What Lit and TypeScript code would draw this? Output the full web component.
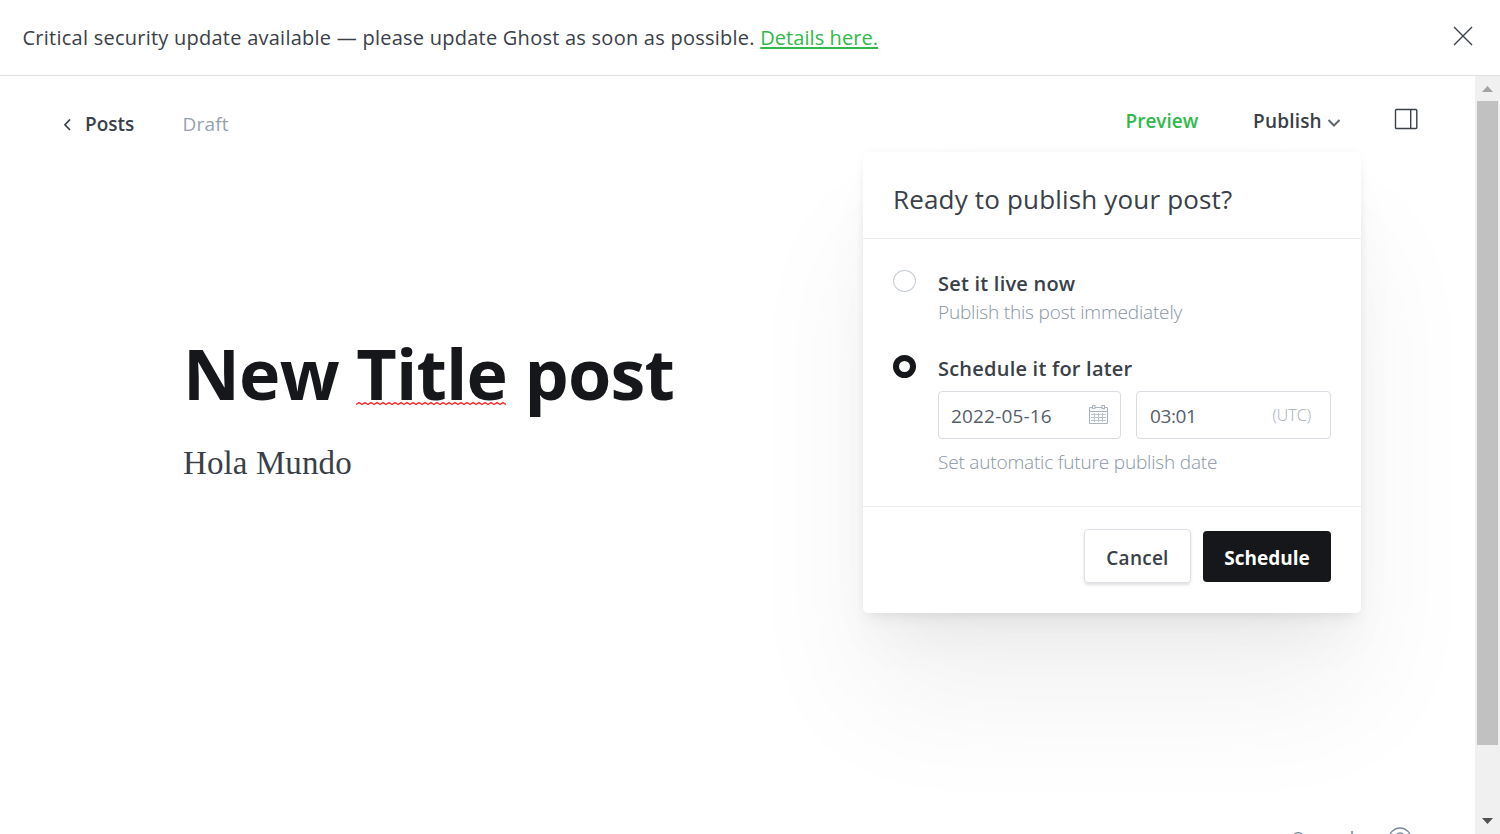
import { LitElement, html, css } from "lit";
import { customElement } from "lit/decorators.js";

@customElement("app-root")
export class AppRoot extends LitElement {
  static styles = css`
    :host { display: flex; flex-direction: column; width: 1500px; height: 834px; overflow: hidden; background: #fff; color: #394047; font-family: "Open Sans", "Noto Sans", sans-serif; box-sizing: border-box; }
    * { box-sizing: border-box; }
    svg { display: block; fill: none; flex: none; }
    span, p, h1, h2, a { white-space: nowrap; margin: 0; }
    .banner { height: 76px; flex: none; border-bottom: 1px solid #dfe1e3; display: flex; align-items: center; justify-content: space-between; padding: 0 27px 3px 22.5px; font-size: 20px; }
    .banner p { letter-spacing: 0.245px; line-height: 30px; padding-top: 3px; }
    .banner a { color: #30b94a; letter-spacing: 0.07px; text-decoration: underline; text-decoration-thickness: 2px; text-underline-offset: 2px; }
    .main { flex: 1; display: flex; min-height: 0; }
    .editor { flex: 1; overflow: hidden; position: relative; display: flex; flex-direction: column; }
    .head { height: 86px; flex: none; display: flex; justify-content: space-between; padding: 28px 57px 0 62px; }
    .left, .right { display: flex; align-items: flex-start; font-size: 19px; line-height: 30px; }
    .left { padding-top: 5px; }
    .left svg { margin: 10px 12px 0 0; }
    .posts { font-weight: 600; width: 97.5px; }
    .draft { color: #95a1ad; letter-spacing: 0.2px; }
    .right { padding-top: 2px; font-weight: 600; }
    .preview { color: #30b94a; width: 127.5px; }
    .publish { width: 74px; letter-spacing: 0.2px; }
    .right .panel { margin: 2px 0 0 53px; }
    .right .chev { margin-top: 12px; }
    .canvas { padding: 166px 0 0 183px; flex: 1; }
    h1 { font-size: 70px; line-height: 90px; font-weight: 700; color: #15171a; letter-spacing: -0.8px; }
    .miss { position: relative; display: inline-block; }
    .miss svg { position: absolute; left: 0; top: 73px; }
    .body { font-family: "Liberation Serif", serif; font-size: 33px; line-height: 40px; padding-top: 25px; letter-spacing: 0.1px; }
    .status { position: absolute; left: 1293px; top: 750px; display: flex; gap: 27px; color: #7c8b9a; font-size: 19px; line-height: 26px; }
    .words { width: 68px; margin-top: -1px; }
    .status svg { margin-top: 1px; }
    .bar { width: 25px; background: #f0f0f0; display: flex; flex-direction: column; align-items: center; padding: 10px 0; justify-content: space-between; }
    .thumb { width: 21px; height: 644px; margin: 9px 2px 73px 2px; background: #c1c1c1; align-self: flex-start; flex: none; }
    .pop { position: absolute; left: 863px; top: 76px; width: 498px; height: 461px; background: #fff; border-radius: 5px; display: flex; flex-direction: column;
      box-shadow: 0 0 9px rgba(0,0,0,.045), 0 10px 14px -4px rgba(0,0,0,.05), 0 33px 50px -10px rgba(0,0,0,.045), 0 88px 130px rgba(0,0,0,.055); }
    .pop h2 { height: 87px; flex: none; border-bottom: 1px solid #e8eaed; padding: 28px 0 0 30px; font-size: 26px; line-height: 38px; font-weight: 400; letter-spacing: 0.17px; }
    .opts { height: 268px; flex: none; border-bottom: 1px solid #e6e9ed; padding: 30px 30px 0; display: flex; flex-direction: column; }
    .opt { display: flex; gap: 22px; height: 85px; }
    .radio { width: 23px; height: 22px; flex: none; border-radius: 50%; border: 1px solid #c8ced5; margin-top: 1px; }
    .radio.on { height: 23px; border: 6.5px solid #15171a; }
    .col { display: flex; flex-direction: column; flex: 1; font-size: 20px; padding-top: 1px; }
    .lab { font-weight: 600; line-height: 28px; letter-spacing: 0.22px; }
    .hint { font-weight: 300; color: #8795a3; font-size: 19px; line-height: 28px; letter-spacing: -0.18px; }
    .fields { display: flex; gap: 15px; padding: 8px 0 9px; }
    .field { height: 48px; border: 1px solid #d9dce0; border-radius: 4px; display: flex; align-items: center; justify-content: space-between; padding: 2px 11px 0 12px; font-size: 19px; color: #54606c; letter-spacing: 0.17px; }
    .date { width: 183px; }
    .time { width: 195px; padding: 2px 19px 0 13px; letter-spacing: -0.4px; }
    .field svg { margin-top: -2px; }
    .utc { font-weight: 300; font-size: 16px; color: #a2adb8; letter-spacing: 0; margin-top: -2px; }
    .foot { display: flex; justify-content: flex-end; gap: 12px; padding: 22px 30px 0; }
    .btn { border-radius: 4px; display: flex; align-items: center; justify-content: center; font-size: 19px; font-weight: 600; padding-top: 4px; }
    .cancel { width: 107px; height: 54px; border: 1px solid #dde1e5; box-shadow: 0 2px 3px rgba(0,0,0,.12); letter-spacing: 0.25px; }
    .go { width: 128px; height: 51px; margin-top: 2px; padding-top: 2px; background: #15171a; color: #fff; font-weight: 700; }
  `;
  render() {
    let wave = "M0 3.5";
    for (let x = 3; x <= 150; x += 3) wave += `L${x} ${(x / 3) % 2 ? 1.5 : 3.5}`;
    return html`
      <div class="banner">
        <p>Critical security update available — please update Ghost as soon as possible. <a>Details here.</a></p>
        <svg width="20" height="20" stroke="#394047" stroke-width="1.4"><path d="M1 1L19 19M19 1L1 19"/></svg>
      </div>
      <div class="main">
        <div class="editor">
          <div class="head">
            <div class="left">
              <svg width="11" height="12" stroke="#394047" stroke-width="1.7"><path d="M8 .5L3 5.75L8 11"/></svg>
              <span class="posts">Posts</span><span class="draft">Draft</span>
            </div>
            <div class="right">
              <span class="preview">Preview</span><span class="publish">Publish</span>
              <svg class="chev" width="14" height="10" stroke="#5d666f" stroke-width="2"><path d="M1.5 2L7 7.5L12.5 2"/></svg>
              <svg class="panel" width="24" height="22" stroke="#394047" stroke-width="1.4"><rect x="1.5" y="1.5" width="21.3" height="19" rx="1"/><path d="M16.7 1.5V20.5"/></svg>
            </div>
          </div>
          <div class="canvas">
            <h1>New <span class="miss">Title<svg width="150" height="5" stroke="#f22" stroke-width="1.4"><path d=${wave}/></svg></span> post</h1>
            <p class="body">Hola Mundo</p>
          </div>
          <div class="status"><span class="words">2 words</span>
            <svg width="24" height="24" stroke="#7c8b9a" stroke-width="1.4"><circle cx="12" cy="12" r="11"/><path d="M8.5 9.5C8.5 4.8 15.5 4.8 15.5 9C15.5 11.5 12 11.5 12 14.5M12 17V18.5"/></svg>
          </div>
          <div class="pop">
            <h2>Ready to publish your post?</h2>
            <div class="opts">
              <div class="opt"><div class="radio"></div><div class="col"><span class="lab">Set it live now</span><span class="hint">Publish this post immediately</span></div></div>
              <div class="opt"><div class="radio on"></div><div class="col"><span class="lab">Schedule it for later</span>
                <div class="fields">
                  <div class="field date"><span>2022-05-16</span>
                    <svg width="20" height="20" stroke="#a9b4bf"><path d="M4 2.5H.5V18.5H18.5V2.5H15.5M6 2.5H13M.5 6.5H18.5"/><rect x="3.5" y=".5" width="2.5" height="3"/><rect x="13" y=".5" width="2.5" height="3"/><path d="M2 9.5H17M2 12.5H17M2 15.5H17M5.5 8V17M9.5 8V17M13.5 8V17" stroke="#bcc5cd"/></svg>
                  </div>
                  <div class="field time"><span>03:01</span><span class="utc">(UTC)</span></div>
                </div>
                <span class="hint">Set automatic future publish date</span></div></div>
            </div>
            <div class="foot"><div class="btn cancel">Cancel</div><div class="btn go">Schedule</div></div>
          </div>
        </div>
        <div class="bar">
          <svg width="11" height="6"><path fill="#a3a3a3" d="M0 6L5.5 0L11 6Z"/></svg>
          <div class="thumb"></div>
          <svg width="11" height="6"><path fill="#505050" d="M0 0L5.5 6L11 0Z"/></svg>
        </div>
      </div>`;
  }
}
